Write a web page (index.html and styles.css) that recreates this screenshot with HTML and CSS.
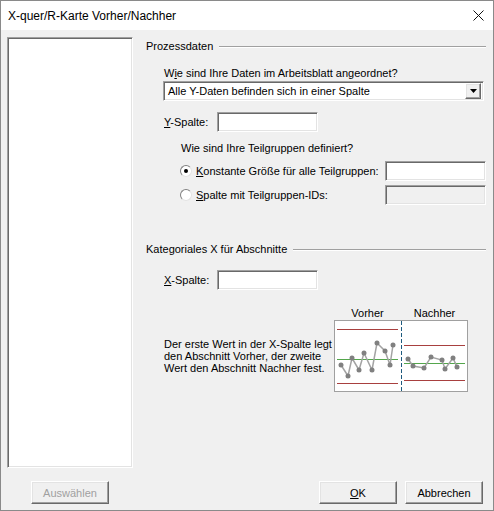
FILE: index.html
```html
<!DOCTYPE html>
<html lang="de">
<head>
    <meta charset="UTF-8">
    <title>X-quer/R-Karte Vorher/Nachher</title>
    <link rel="stylesheet" href="styles.css">
</head>
<body>
    <div class="dialog">
        <div class="titlebar">
            <span class="title">X-quer/R-Karte Vorher/Nachher</span>
            <svg class="close" width="11" height="11" viewBox="0 0 11 11">
                <path d="M0.5 0.5L10.5 10.5M10.5 0.5L0.5 10.5" stroke="#111" stroke-width="1" fill="none"/>
            </svg>
        </div>

        <div class="content">
            <div class="varlist sunken"></div>

            <div class="panel">
                <div class="group-head"><span>Prozessdaten</span><span class="rule"></span></div>
                <div class="indent">
                    <div class="label question">W<u>i</u>e sind Ihre Daten im Arbeitsblatt angeordnet?</div>
                    <div class="combo sunken">
                        <span class="combo-text">Alle Y-Daten befinden sich in einer Spalte</span>
                        <span class="combo-btn raised">
                            <svg width="7" height="4" viewBox="0 0 7 4"><path d="M0 0H7L3.5 4Z" fill="#000"/></svg>
                        </span>
                    </div>
                    <div class="field-row">
                        <span class="label field-label"><u>Y</u>-Spalte:</span>
                        <span class="edit sunken"></span>
                    </div>

                    <div class="subgroup">
                        <div class="label">Wie sind Ihre Teilgruppen definiert?</div>
                        <div class="radio-row first">
                            <span class="radio checked"></span>
                            <span class="label"><u>K</u>onstante Größe für alle Teilgruppen:</span>
                            <span class="edit sunken"></span>
                        </div>
                        <div class="radio-row">
                            <span class="radio"></span>
                            <span class="label"><u>S</u>palte mit Teilgruppen-IDs:</span>
                            <span class="edit sunken disabled"></span>
                        </div>
                    </div>
                </div>

                <div class="group-head second"><span>Kategoriales X für Abschnitte</span><span class="rule"></span></div>
                <div class="indent">
                    <div class="field-row xrow">
                        <span class="label field-label"><u>X</u>-Spalte:</span>
                        <span class="edit sunken"></span>
                    </div>
                    <div class="explain">
                        <p class="hint">Der erste Wert in der X-Spalte legt<br>den Abschnitt Vorher, der zweite<br>Wert den Abschnitt Nachher fest.</p>
                        <div class="chart">
                            <div class="chart-labels"><span>Vorher</span><span>Nachher</span></div>
                            <svg class="chart-box" width="134" height="72" viewBox="0 0 134 72">
                                <rect x="0.5" y="0.5" width="133" height="71" fill="#fff" stroke="#a0a0a0"/>
                                <!-- before: limits and centre -->
                                <line x1="3" y1="9.5" x2="64" y2="9.5" stroke="#a8403f"/>
                                <line x1="3" y1="39.5" x2="64" y2="39.5" stroke="#54a64c"/>
                                <line x1="3" y1="63.5" x2="64" y2="63.5" stroke="#a8403f"/>
                                <!-- after: limits and centre -->
                                <line x1="70" y1="25.5" x2="131" y2="25.5" stroke="#a8403f"/>
                                <line x1="70" y1="43.5" x2="131" y2="43.5" stroke="#54a64c"/>
                                <line x1="70" y1="60.5" x2="131" y2="60.5" stroke="#a8403f"/>
                                <line x1="67.5" y1="1" x2="67.5" y2="71" stroke="#1d5a7e" stroke-dasharray="4 2"/>
                                <polyline points="7,45 14,56 18,38 25,50 30,33 38,50 43,23 51,31 56,45 59,25" fill="none" stroke="#a3a3a3" stroke-width="1.5"/>
                                <polyline points="74,39 79,46 90,48 97,37 108,40 111,49 119,38 123,47" fill="none" stroke="#a3a3a3" stroke-width="1.5"/>
                                <g fill="#808080">
                                    <circle cx="7" cy="45" r="2.5"/><circle cx="14" cy="56" r="2.5"/>
                                    <circle cx="18" cy="38" r="2.5"/><circle cx="25" cy="50" r="2.5"/>
                                    <circle cx="30" cy="33" r="2.5"/><circle cx="38" cy="50" r="2.5"/>
                                    <circle cx="43" cy="23" r="2.5"/><circle cx="51" cy="31" r="2.5"/>
                                    <circle cx="56" cy="45" r="2.5"/><circle cx="59" cy="25" r="2.5"/>
                                    <circle cx="74" cy="39" r="2.5"/><circle cx="79" cy="46" r="2.5"/>
                                    <circle cx="90" cy="48" r="2.5"/><circle cx="97" cy="37" r="2.5"/>
                                    <circle cx="108" cy="40" r="2.5"/><circle cx="111" cy="49" r="2.5"/>
                                    <circle cx="119" cy="38" r="2.5"/><circle cx="123" cy="47" r="2.5"/>
                                </g>
                            </svg>
                        </div>
                    </div>
                </div>
            </div>
        </div>

        <div class="footer">
            <button class="btn raised" disabled>Auswählen</button>
            <button class="btn raised ok"><u>O</u>K</button>
            <button class="btn raised">Abbrechen</button>
        </div>
    </div>
</body>
</html>
```

FILE: styles.css
```css
body {
    margin: 0;
    font-family: "Liberation Sans", Arial, sans-serif;
    font-size: 11px;
    color: #000;
}

.dialog {
    width: 494px;
    height: 511px;
    box-sizing: border-box;
    border: 1px solid #8a8a8a;
    background-color: #f0f0f0;
}

.titlebar {
    height: 29px;
    background-color: #fff;
    display: flex;
    align-items: center;
    padding-left: 7px;
}

.title {
    font-size: 12px;
    flex: 1;
}

.close {
    margin-right: 9px;
}

/* classic 3D edges */
.sunken {
    box-sizing: border-box;
    border: 1px solid;
    border-color: #a0a0a0 #fff #fff #a0a0a0;
    box-shadow: inset 1px 1px 0 #696969, inset -1px -1px 0 #e3e3e3;
    background-color: #fff;
}

.raised {
    box-sizing: border-box;
    border: 1px solid;
    border-color: #fff #696969 #696969 #fff;
    box-shadow: inset -1px -1px 0 #a0a0a0, inset 1px 1px 0 #e3e3e3;
    background-color: #f0f0f0;
}

.content {
    height: 441px;
    box-sizing: border-box;
    padding: 7px 0 0 6px;
    display: flex;
}

.varlist {
    width: 126px;
    height: 431px;
}

.panel {
    flex: 1;
    margin: 0 7px 0 13px;
}

.group-head {
    display: flex;
    align-items: center;
    gap: 6px;
    line-height: 13px;
    margin-top: 3px;
}

.group-head.second {
    margin-top: 38px;
}

.rule {
    flex: 1;
    border-top: 1px solid #a0a0a0;
    border-bottom: 1px solid #fff;
}

.indent {
    padding-left: 17px;
}

.label {
    line-height: 13px;
    padding-left: 1px;
    white-space: nowrap;
}

.question {
    margin-top: 14px;
}

.combo {
    margin-top: 1px;
    margin-right: 2px;
    height: 20px;
    display: flex;
    align-items: center;
    padding: 2px;
}

.combo-text {
    flex: 1;
    padding-left: 2px;
}

.combo-btn {
    width: 16px;
    height: 16px;
    display: flex;
    align-items: center;
    justify-content: center;
}

.field-row {
    display: flex;
    align-items: center;
    margin-top: 11px;
}

.field-label {
    width: 53px;
}

.edit {
    width: 101px;
    height: 20px;
}

.edit.disabled {
    background-color: #f0f0f0;
}

.subgroup {
    padding-left: 17px;
    margin-top: 10px;
}

.radio-row {
    display: flex;
    align-items: center;
    margin-top: 4px;
}

.radio-row.first {
    margin-top: 6px;
}

.radio-row .edit {
    margin-left: auto;
}

.radio {
    width: 12px;
    height: 12px;
    box-sizing: border-box;
    border-radius: 50%;
    border: 1px solid;
    border-color: #808080 #e3e3e3 #e3e3e3 #808080;
    background-color: #fff;
    margin-right: 3px;
    position: relative;
}

.radio.checked::after {
    content: "";
    position: absolute;
    left: 3px;
    top: 3px;
    width: 4px;
    height: 4px;
    border-radius: 50%;
    background-color: #000;
}

.xrow {
    margin-top: 14px;
}

.explain {
    display: flex;
    margin-top: 17px;
}

.hint {
    width: 170px;
    margin: 31px 0 0 0;
    padding-left: 1px;
    line-height: 12px;
}

.chart-labels {
    display: flex;
    line-height: 13px;
}

.chart-labels span {
    width: 67px;
    text-align: center;
}

.chart-box {
    display: block;
}

.footer {
    height: 39px;
    box-sizing: border-box;
    padding: 10px 10px 0 30px;
    display: flex;
    align-items: flex-start;
    gap: 8px;
}

.btn {
    width: 78px;
    height: 23px;
    font-family: inherit;
    font-size: 11px;
    color: #000;
    padding: 0;
}

.btn:disabled {
    color: #a0a0a0;
}

.btn.ok {
    margin-left: auto;
}
```
